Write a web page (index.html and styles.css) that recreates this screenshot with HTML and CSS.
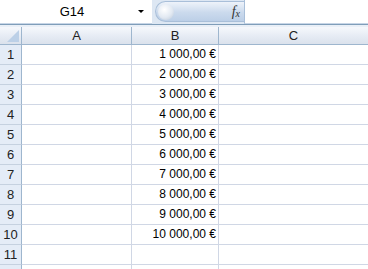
FILE: index.html
```html
<!DOCTYPE html>
<html lang="fr">
<head>
    <meta charset="UTF-8">
    <title>Classeur</title>
    <link rel="stylesheet" href="styles.css">
</head>
<body>
    <div class="formula-bar">
        <div class="name-box">
            <span class="name-text">G14</span>
            <span class="name-arrow"></span>
        </div>
        <div class="fx-pill">
            <span class="pill-knob"></span>
            <span class="fx">f<sub>x</sub></span>
        </div>
        <div class="formula-input"></div>
    </div>
    <div class="bar-sep"></div>

    <div class="sheet">
        <div class="corner"><span class="corner-tri"></span></div>
        <div class="col-head">A</div>
        <div class="col-head">B</div>
        <div class="col-head last">C</div>
    </div>
    <div class="sheet" id="rows"></div>

    <script>
        const rowsEl = document.getElementById('rows');
        for (let i = 1; i <= 12; i++) {
            const value = i <= 10 ? (i * 1000).toLocaleString('fr-FR').replace(/\s/g, ' ') + ',00 €' : '';
            // la ligne 12 est coupée par le bord, on ne montre pas son numéro
            const label = i <= 11 ? i : '';
            rowsEl.innerHTML +=
                `<div class="row-head">${label}</div>` +
                `<div class="cell"></div>` +
                `<div class="cell num">${value}</div>` +
                `<div class="cell last"></div>`;
        }
    </script>
</body>
</html>
```

FILE: styles.css
```css
body {
    margin: 0;
    font-family: 'Liberation Sans', Arial, sans-serif;
    font-size: 12px;
    color: #000;
    background: #fff;
    overflow: hidden;
}

.formula-bar {
    display: flex;
    height: 24px;
    background: #dde7f3;
}

.name-box {
    width: 152px;
    display: flex;
    align-items: center;
    background: #fff;
    border-bottom: 1px solid #c7d5e6;
    box-sizing: border-box;
}

.name-text {
    flex: 1;
    text-align: center;
    font-size: 13px;
    padding-left: 6px;
}

.name-arrow {
    width: 0;
    height: 0;
    margin-right: 8px;
    border-left: 3px solid transparent;
    border-right: 3px solid transparent;
    border-top: 3px solid #000;
}

.fx-pill {
    width: 88px;
    margin: 1px 0 2px 3px;
    position: relative;
    display: flex;
    align-items: center;
    justify-content: flex-end;
    border-radius: 11px 0 0 11px;
    background: linear-gradient(#eef3fa, #cbdaed 55%, #bccfe7);
    border: 1px solid #a9bfd9;
    border-right: none;
}

.pill-knob {
    position: absolute;
    left: 2px;
    top: 2px;
    width: 16px;
    height: 16px;
    border-radius: 50%;
    background: radial-gradient(circle at 40% 35%, #ffffff, #e2e9f2 55%, #b9c6d6);
}

.fx {
    font-family: 'Liberation Serif', serif;
    font-style: italic;
    font-size: 14px;
    color: #333;
    margin-right: 4px;
}

.fx sub {
    font-size: 10px;
    vertical-align: -1px;
}

.formula-input {
    flex: 1;
    background: #fff;
    border-left: 1px solid #a9bfd9;
    border-bottom: 1px solid #c7d5e6;
}

.bar-sep {
    height: 3px;
    background: #e9eff7;
    border-top: 1px solid #7f9db9;
    box-sizing: border-box;
}

.sheet {
    display: grid;
    grid-template-columns: 22px 110px 87px 1fr;
}

.sheet > div {
    box-sizing: border-box;
    border-right: 1px solid #d0d7e5;
    border-bottom: 1px solid #d0d7e5;
}

.corner,
.col-head {
    height: 18px;
    background: linear-gradient(#f6f8fc, #e4eaf3 60%, #dbe2ec);
    border-bottom: 1px solid #9eb6ce !important;
    border-right: 1px solid #9eb6ce !important;
}

.corner {
    position: relative;
}

.corner-tri {
    position: absolute;
    right: 2px;
    bottom: 2px;
    width: 0;
    height: 0;
    border-left: 12px solid transparent;
    border-bottom: 12px solid #bcd0e7;
}

.col-head {
    text-align: center;
    line-height: 17px;
    font-size: 13px;
    color: #222;
}

.col-head.last,
.cell.last {
    border-right: none !important;
}

.row-head {
    height: 20px;
    line-height: 19px;
    text-align: center;
    font-size: 13px;
    color: #222;
    background: #e4ecf7;
    border-right: 1px solid #9eb6ce !important;
    border-bottom: 1px solid #c5d1e0 !important;
}

.cell {
    height: 20px;
    line-height: 19px;
}

.num {
    text-align: right;
    padding-right: 2px;
}
```
